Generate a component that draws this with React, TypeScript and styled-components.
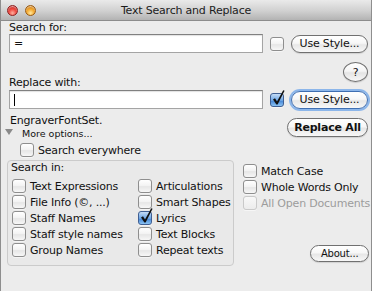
import React from 'react';
import styled, { createGlobalStyle, css } from 'styled-components';

const Global = createGlobalStyle`
  html, body { margin: 0; padding: 0; background: #ffffff; }
  body {
    font-family: "DejaVu Sans", "Liberation Sans", sans-serif;
    font-size: 11px;
    letter-spacing: -0.2px;
    color: #111;
  }
`;

const Window = styled.div`
  width: 372px;
  height: 291px;
  box-sizing: border-box;
  border-left: 1px solid #8e8e8e;
  border-right: 1px solid #8e8e8e;
  background: #ececec;
  overflow: hidden;
  display: flex;
  flex-direction: column;
`;

const TitleBar = styled.div`
  height: 20px;
  flex: none;
  display: grid;
  grid-template-columns: 1fr auto 1fr;
  align-items: center;
  background: linear-gradient(#eaeaea, #d0d0d0 55%, #b3b3b3);
  border-bottom: 1px solid #8c8c8c;
`;

const Lights = styled.div`
  display: flex;
  gap: 7px;
  padding-left: 6px;
`;

const Light = styled.span<{ $color: 'red' | 'orange' }>`
  width: 11px;
  height: 11px;
  border-radius: 50%;
  box-sizing: border-box;
  border: 1px solid ${(p) => (p.$color === 'red' ? '#8e2020' : '#9a5a10')};
  background: ${(p) =>
    p.$color === 'red'
      ? 'radial-gradient(circle at 50% 78%, #ffb0a0 0%, #f04a40 45%, #b01818 100%)'
      : 'radial-gradient(circle at 50% 78%, #ffe8a0 0%, #f5aa30 45%, #b86a10 100%)'};
  box-shadow: inset 0 1px 1px rgba(255, 255, 255, 0.6);
`;

const Title = styled.div`
  font-size: 11px;
  color: #1c1c1c;
  white-space: nowrap;
`;

const Content = styled.div`
  flex: 1;
  padding: 0 3px 0 8px;
  display: flex;
  flex-direction: column;
`;

const Label = styled.div<{ $top?: number; $indent?: number }>`
  height: 13px;
  line-height: 13px;
  margin-top: ${(p) => p.$top ?? 0}px;
  margin-left: ${(p) => p.$indent ?? 0}px;
  white-space: nowrap;
`;

const FieldRow = styled.div<{ $top?: number }>`
  display: flex;
  align-items: center;
  gap: 7px;
  height: 19px;
  margin-top: ${(p) => p.$top ?? 0}px;
`;

const TextField = styled.div`
  width: 254px;
  height: 19px;
  box-sizing: border-box;
  border: 1px solid #a4a4a4;
  border-top-color: #808080;
  background: #fff;
  box-shadow: inset 0 1px 1px rgba(0, 0, 0, 0.12);
  padding-left: 4px;
  display: flex;
  align-items: center;
  font-size: 11px;
`;

const Caret = styled.span`
  display: inline-block;
  width: 1px;
  height: 12px;
  background: #000;
`;

const Box = styled.span<{ $checked?: boolean; $disabled?: boolean }>`
  position: relative;
  flex: none;
  width: 14px;
  height: 14px;
  box-sizing: border-box;
  border-radius: 3px;
  border: 1px solid ${(p) => (p.$disabled ? '#c9c9c9' : p.$checked ? '#3f5f93' : '#8e8e8e')};
  background: ${(p) =>
    p.$disabled
      ? 'linear-gradient(#f8f8f8, #ececec)'
      : p.$checked
      ? 'linear-gradient(#c4dcf6, #6aa4e4 55%, #4a8ad8 60%, #8cc4f4)'
      : 'linear-gradient(#ffffff, #f2f2f2 50%, #e6e6e6 55%, #f7f7f7)'};
  box-shadow: 0 1px 0 rgba(255, 255, 255, 0.5);
  svg {
    position: absolute;
    left: 1px;
    top: -4px;
    overflow: visible;
  }
`;

const Check = ({ checked, disabled }: { checked?: boolean; disabled?: boolean }) => (
  <Box $checked={checked} $disabled={disabled}>
    {checked && (
      <svg width="14" height="16" viewBox="0 0 14 16">
        <path d="M1 9.5 L3 8.3 L5 11.6 L11.2 0.2 L12.6 0.8 L5.6 14.6 L4.4 14.6 Z" fill="#111" />
      </svg>
    )}
  </Box>
);

const PushButton = styled.div<{
  $w: number;
  $h?: number;
  $top?: number;
  $bold?: boolean;
  $focus?: boolean;
  $small?: boolean;
}>`
  flex: none;
  width: ${(p) => p.$w}px;
  height: ${(p) => p.$h ?? 19}px;
  margin-top: ${(p) => p.$top ?? 0}px;
  box-sizing: border-box;
  border: 1px solid #707070;
  border-radius: 10px;
  background: linear-gradient(#ffffff, #f7f7f7 45%, #e7e7e7 55%, #f8f8f8);
  display: flex;
  align-items: center;
  justify-content: center;
  font-size: ${(p) => (p.$small ? 10 : 11)}px;
  font-weight: ${(p) => (p.$bold ? 700 : 400)};
  color: #111;
  white-space: nowrap;
  box-shadow: 0 1px 1px rgba(0, 0, 0, 0.12);
  ${(p) =>
    p.$focus &&
    css`
      border-color: #3f6fb2;
      box-shadow: 0 0 0 2px #8cb6ea;
    `}
`;

const HelpRow = styled.div`
  display: flex;
  justify-content: space-between;
  align-items: flex-start;
  margin-top: 9px;
`;

const HelpButton = styled.div`
  width: 25px;
  height: 20px;
  box-sizing: border-box;
  border: 1px solid #707070;
  border-radius: 50%;
  background: linear-gradient(#ffffff, #f5f5f5 45%, #e4e4e4 55%, #f8f8f8);
  display: flex;
  align-items: center;
  justify-content: center;
  font-size: 11px;
  box-shadow: 0 1px 1px rgba(0, 0, 0, 0.15);
`;

const ActionRow = styled.div`
  display: flex;
  justify-content: space-between;
  align-items: flex-start;
  margin-top: 5px;
`;

const Stack = styled.div`
  display: flex;
  flex-direction: column;
`;

const Disclosure = styled.div`
  display: flex;
  align-items: center;
  height: 12px;
  margin-left: -4px;
  font-size: 9.5px;
  letter-spacing: 0;
  gap: 9px;
`;

const Triangle = styled.span`
  width: 0;
  height: 0;
  border-left: 4px solid transparent;
  border-right: 4px solid transparent;
  border-top: 6px solid #8a8a8a;
  margin-top: -3px;
`;

const CheckRow = styled.div<{ $indent?: number; $h?: number; $disabled?: boolean }>`
  display: flex;
  align-items: center;
  gap: 4px;
  height: ${(p) => p.$h ?? 16}px;
  margin-left: ${(p) => p.$indent ?? 0}px;
  white-space: nowrap;
  color: ${(p) => (p.$disabled ? '#9c9c9c' : '#111')};
`;

const Everywhere = styled(CheckRow)`
  margin-top: 4px;
`;

const Bottom = styled.div`
  display: flex;
  margin-top: 3px;
`;

const GroupBox = styled.div`
  flex: none;
  width: 227px;
  height: 106px;
  margin-left: -2px;
  box-sizing: border-box;
  border: 1px solid #cbcbcb;
  border-radius: 4px;
  background: #e9e9e9;
  padding: 0 0 0 3px;
`;

const GroupGrid = styled.div`
  display: grid;
  grid-template-columns: 126px 1fr;
  grid-auto-rows: 16px;
  margin-top: 4px;
  padding-left: 1px;
`;

const SideColumn = styled.div`
  flex: 1;
  display: flex;
  flex-direction: column;
  margin-left: 9px;
  padding-top: 3px;
`;

const AboutRow = styled.div`
  display: flex;
  justify-content: flex-end;
  margin-top: 34px;
  padding-right: 1px;
`;

const Item = ({ label, checked, disabled }: { label: string; checked?: boolean; disabled?: boolean }) => (
  <CheckRow $disabled={disabled}>
    <Check checked={checked} disabled={disabled} />
    <span>{label}</span>
  </CheckRow>
);

const groupItems: [string, boolean][] = [
  ['Text Expressions', false],
  ['Articulations', false],
  ['File Info (©, ...)', false],
  ['Smart Shapes', false],
  ['Staff Names', false],
  ['Lyrics', true],
  ['Staff style names', false],
  ['Text Blocks', false],
  ['Group Names', false],
  ['Repeat texts', false],
];

export default function App() {
  return (
    <>
      <Global />
      <Window>
        <TitleBar>
          <Lights>
            <Light $color="red" />
            <Light $color="orange" />
          </Lights>
          <Title>Text Search and Replace</Title>
          <span />
        </TitleBar>
        <Content>
          <Label>Search for:</Label>
          <FieldRow>
            <TextField>=</TextField>
            <Check />
            <PushButton $w={77} $h={18}>
              Use Style...
            </PushButton>
          </FieldRow>
          <HelpRow>
            <Label $top={14}>Replace with:</Label>
            <HelpButton>?</HelpButton>
          </HelpRow>
          <FieldRow $top={1}>
            <TextField>
              <Caret />
            </TextField>
            <Check checked />
            <PushButton $w={77} $h={18} $focus>
              Use Style...
            </PushButton>
          </FieldRow>
          <ActionRow>
            <Stack>
              <Label $indent={1}>EngraverFontSet.</Label>
              <Disclosure>
                <Triangle />
                <span>More options...</span>
              </Disclosure>
            </Stack>
            <PushButton $w={81} $top={4} $bold>
              Replace All
            </PushButton>
          </ActionRow>
          <Everywhere $indent={11} $h={14}>
            <Check />
            <span>Search everywhere</span>
          </Everywhere>
          <Bottom>
            <GroupBox>
              <Label>Search in:</Label>
              <GroupGrid>
                {groupItems.map(([label, checked]) => (
                  <Item key={label} label={label} checked={checked} />
                ))}
              </GroupGrid>
            </GroupBox>
            <SideColumn>
              <Item label="Match Case" />
              <Item label="Whole Words Only" />
              <Item label="All Open Documents" disabled />
              <AboutRow>
                <PushButton $w={59} $h={17} $small>
                  About...
                </PushButton>
              </AboutRow>
            </SideColumn>
          </Bottom>
        </Content>
      </Window>
    </>
  );
}
